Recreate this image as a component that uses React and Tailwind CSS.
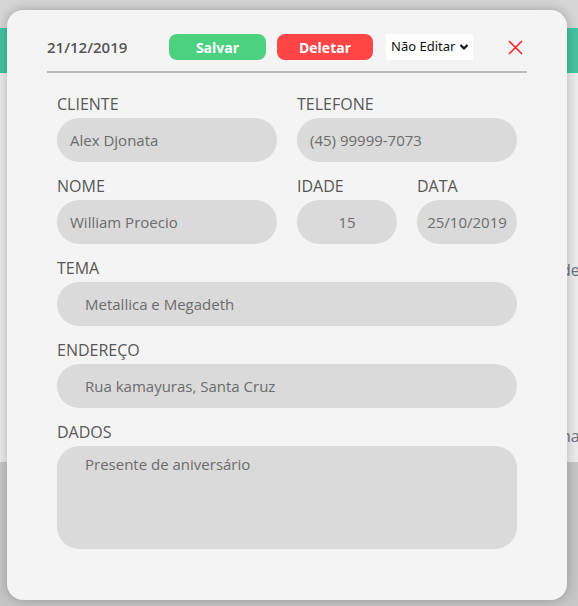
const font = { fontFamily: '"Open Sans", "Noto Sans", sans-serif' };

function Field({ label, value, className = "", inputClass = "" }) {
  return (
    <div className={`flex flex-col ${className}`}>
      <label className="text-[16px] leading-[22px] text-[#575757] mb-[3px]">
        {label}
      </label>
      <div
        className={`h-[44px] rounded-[22px] bg-[#dadada] flex items-center text-[15px] text-[#6c6c6c] ${inputClass}`}
      >
        {value}
      </div>
    </div>
  );
}

export default function App() {
  return (
    <div className="relative w-full h-[606px] overflow-hidden" style={font}>
      {/* page behind the modal */}
      <div className="flex flex-col h-full">
        <div className="h-[28px] bg-[#d6d6d6]"></div>
        <div className="h-[45px] bg-[#46c39f]"></div>
        <div className="h-[389px] bg-[#ececec] flex flex-col text-[16px] text-[#6f7080] whitespace-nowrap">
          <div className="pl-[561px] pt-[186px] leading-[22px]">de</div>
          <div className="pl-[561px] pt-[144px] leading-[22px]">na</div>
        </div>
        <div className="flex-1 bg-[#c6c6c6]"></div>
      </div>

      {/* modal */}
      <div className="absolute left-[7px] top-[10px] w-[560px] h-[590px] rounded-[16px] bg-[#f4f4f4] shadow-[0_0_12px_rgba(0,0,0,0.25)] px-[40px] pt-[24px]">
        <div className="flex items-center h-[26px]">
          <span className="text-[15px] font-semibold text-[#555555] w-[122px] shrink-0">
            21/12/2019
          </span>
          <button className="w-[97px] h-[26px] shrink-0 rounded-[8px] bg-[#4cd181] text-white text-[14px] font-bold">
            Salvar
          </button>
          <button className="ml-[11px] w-[96px] h-[26px] shrink-0 rounded-[8px] bg-[#ff4545] text-white text-[14px] font-bold">
            Deletar
          </button>
          <div
            className="ml-[13px] w-[87px] h-[26px] shrink-0 rounded-[2px] bg-white flex items-center pl-[5px] gap-[4px] text-[13px] text-[#111111] whitespace-nowrap"
            style={{ fontFamily: '"Noto Sans", sans-serif' }}
          >
            <span>Não Editar</span>
            <svg width="10" height="8" viewBox="0 0 10 8" className="shrink-0">
              <path d="M1.5 2 L5 5.5 L8.5 2" fill="none" stroke="#111" strokeWidth="2.2" />
            </svg>
          </div>
          <button className="ml-[34px] w-[16px] h-[16px] shrink-0 flex items-center justify-center">
            <svg width="15" height="15" viewBox="0 0 15 15">
              <path d="M1 1 L14 14 M14 1 L1 14" stroke="#ff1a1a" strokeWidth="1.5" />
            </svg>
          </button>
        </div>
        <div className="mt-[11px] h-[2px] bg-[#bdbdbd]"></div>

        <div className="px-[10px] pt-[20px] flex flex-col gap-[13px]">
          <div className="grid grid-cols-2 gap-[20px]">
            <Field label="CLIENTE" value="Alex Djonata" inputClass="pl-[13px]" />
            <Field label="TELEFONE" value="(45) 99999-7073" inputClass="pl-[13px]" />
          </div>
          <div className="flex gap-[20px]">
            <Field label="NOME" value="William Proecio" className="w-[220px]" inputClass="pl-[13px]" />
            <Field label="IDADE" value="15" className="w-[100px]" inputClass="justify-center" />
            <Field label="DATA" value="25/10/2019" className="w-[100px]" inputClass="justify-center" />
          </div>
          <Field label="TEMA" value="Metallica e Megadeth" inputClass="pl-[28px]" />
          <Field label="ENDEREÇO" value="Rua kamayuras, Santa Cruz" inputClass="pl-[28px]" />
          <div className="flex flex-col">
            <label className="text-[16px] leading-[22px] text-[#575757] mb-[3px]">DADOS</label>
            <div className="h-[103px] rounded-[22px] bg-[#dadada] pl-[28px] pt-[7px] text-[15px] leading-[22px] text-[#6c6c6c]">
              Presente de aniversário
            </div>
          </div>
        </div>
      </div>
    </div>
  );
}
